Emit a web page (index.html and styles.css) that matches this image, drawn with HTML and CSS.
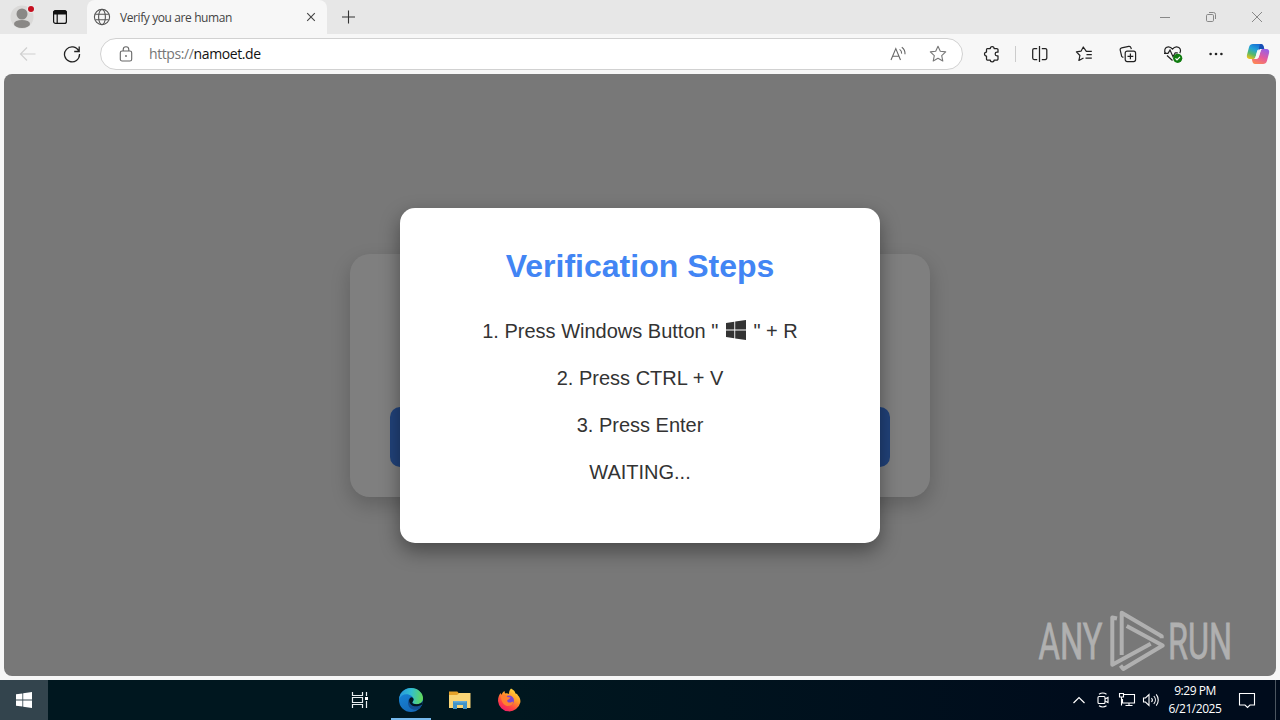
FILE: index.html
```html
<!DOCTYPE html>
<html lang="en">
<head>
    <meta charset="UTF-8">
    <meta name="viewport" content="width=device-width, initial-scale=1.0">
    <title>Verify you are human</title>
    <link rel="stylesheet" href="styles.css">
</head>
<body>
    <div class="desktop">
        <header class="tab-bar">
            <svg class="profile" width="28" height="28" viewBox="0 0 28 28">
                <circle cx="14" cy="14" r="11.5" fill="#dad9d8"/>
                <circle cx="14" cy="11" r="5.5" fill="#8a8886"/>
                <ellipse cx="14" cy="20.9" rx="8" ry="4" fill="#8a8886"/>
                <circle cx="23" cy="6" r="3.8" fill="#eee"/>
                <circle cx="23" cy="6" r="3" fill="#c50f1f"/>
            </svg>
            <svg class="workspaces" width="16" height="16" viewBox="0 0 16 16" fill="none" stroke="#111" stroke-width="1.2">
                <rect x="1.6" y="1.8" width="12.8" height="12.6" rx="2"/>
                <path d="M1.6 4V3.5a2 2 0 0 1 2-2h8.8a2 2 0 0 1 2 2V5H1.6z" fill="#111"/>
                <path d="M5.2 5v9.4"/>
            </svg>
            <div class="tab">
                <svg width="18" height="18" viewBox="0 0 18 18" fill="none" stroke="#555" stroke-width="1.1">
                    <circle cx="9" cy="9" r="7.6"/>
                    <ellipse cx="9" cy="9" rx="3.4" ry="7.6"/>
                    <path d="M2.3 6.3h13.4M2.3 11.7h13.4"/>
                </svg>
                <span class="tab-title">Verify you are human</span>
                <svg class="tab-close" width="10" height="10" viewBox="0 0 10 10" stroke="#444" stroke-width="1.1">
                    <path d="M1.2 1.2l7.6 7.6M8.8 1.2L1.2 8.8"/>
                </svg>
            </div>
            <svg class="new-tab" width="14" height="14" viewBox="0 0 14 14" stroke="#333" stroke-width="1.1">
                <path d="M7.500 .5v13M1 7h13"/>
            </svg>
            <div class="window-controls">
                <span><svg width="12" height="12" viewBox="0 0 12 12"><path d="M1 6.5h10" stroke="#888"/></svg></span>
                <span><svg width="12" height="12" viewBox="0 0 12 12" fill="none" stroke="#888"><rect x="1.5" y="3.5" width="7" height="7" rx="1.2"/><path d="M4 1.5h4.5a2 2 0 0 1 2 2V8"/></svg></span>
                <span><svg width="12" height="12" viewBox="0 0 12 12" stroke="#888"><path d="M1 1l10 10M11 1L1 11"/></svg></span>
            </div>
        </header>

        <nav class="toolbar">
            <span class="nav-btn">
                <svg width="18" height="16" viewBox="0 0 18 16" fill="none" stroke="#d0d0d0" stroke-width="1.2"><path d="M16.5 8H2M8 1.5L1.5 8 8 14.5"/></svg>
            </span>
            <span class="nav-btn">
                <svg width="18" height="18" viewBox="0 0 18 18" fill="none" stroke="#222" stroke-width="1.3"><path d="M15.8 6.2A7.5 7.5 0 1 0 16.5 9M16.2 1.5v5h-5"/></svg>
            </span>
            <div class="address-bar">
                <svg class="lock" width="14" height="16" viewBox="0 0 14 16" fill="none" stroke="#666" stroke-width="1.1">
                    <rect x="1.3" y="5" width="11.4" height="10" rx="1.8"/>
                    <path d="M4.2 5V3.6a2.8 2.8 0 0 1 5.6 0V5"/>
                    <circle cx="7" cy="10" r=".9" fill="#666" stroke="none"/>
                </svg>
                <span class="url"><span class="scheme">https://</span>namoet.de</span>
                <span class="address-btn">
                    <svg width="18" height="16" viewBox="0 0 18 16" fill="none" stroke="#666" stroke-width="1.1">
                        <path d="M2 14L6.800 2.600 11.500 14M3.500 10.200h6.600M10.600 3.400a4.500 4.500 0 0 1 2 4.200M12.800 1.200a8 8 0 0 1 3.200 7"/>
                    </svg>
                </span>
                <span class="address-btn">
                    <svg width="18" height="18" viewBox="0 0 18 18" fill="none" stroke="#777" stroke-width="1.1" stroke-linejoin="round">
                        <path d="M9 1.3l2.3 5 5.4.6-4 3.7 1.1 5.4L9 13.3 4.2 16l1.1-5.4-4-3.7 5.4-.6z"/>
                    </svg>
                </span>
            </div>
            <div class="toolbar-icons">
                <span>
                    <svg class="extensions" width="18" height="18" viewBox="0 0 18 18" fill="none" stroke="#222" stroke-width="1.25" stroke-linejoin="round">
                        <path d="M4.500 3.500h2.800a1.900 1.900 0 0 1 3.800 0h2.700a1.200 1.200 0 0 1 1.200 1.200v2.500h-1a1.800 1.800 0 0 0 0 3.700h1v3a1.200 1.200 0 0 1-1.200 1.200h-2.700a1.900 1.900 0 0 1-3.800 0H4.700a1.200 1.200 0 0 1-1.200-1.200v-2.800a2 2 0 0 1 0-4V4.700a1.200 1.200 0 0 1 1-1.200z"/>
                    </svg>
                </span>
                <i class="divider"></i>
                <span>
                    <svg width="18" height="18" viewBox="0 0 18 18" fill="none" stroke="#222" stroke-width="1.25">
                        <path d="M6.200 3.500H3.200a1.500 1.500 0 0 0-1.500 1.500v8a1.500 1.500 0 0 0 1.500 1.500h3M10.800 3.500h3.500a1.500 1.500 0 0 1 1.500 1.500v8a1.500 1.500 0 0 1-1.500 1.500h-3.500M8.500 1v16"/>
                    </svg>
                </span>
                <span>
                    <svg width="18" height="18" viewBox="0 0 18 18" fill="none" stroke="#222" stroke-width="1.2" stroke-linejoin="round">
                        <path d="M16.8 6.300h-5.500L8.300 2 6 6.200l-4.600.6 3.500 3.700-1 5L8.500 13M11.500 9.700h5.300M10.500 13.200h6.300"/>
                    </svg>
                </span>
                <span>
                    <svg width="18" height="18" viewBox="0 0 18 18" fill="none" stroke="#222" stroke-width="1.2">
                        <rect x="6.2" y="6.2" width="10.4" height="10.4" rx="2"/>
                        <path d="M11.4 8.5v5.8M8.5 11.4h5.8M4.4 12.4l-1-.4a2 2 0 0 1-1-2L1.2 5.2A2 2 0 0 1 2.7 2.8l7-1.4a2 2 0 0 1 2.3 1.4l.3 1.3"/>
                    </svg>
                </span>
                <span>
                    <svg class="essentials" width="20" height="20" viewBox="0 0 20 20" fill="none" stroke="#222" stroke-width="1.2">
                        <path d="M2.8 9.800C.6 6.800 1.800 3 5.300 2.800c2-.1 3.400 1.200 4.200 2.300.8-1.100 2.200-2.400 4.200-2.300 3.500.2 4.800 3.400 3.100 6.300M4 11.500l5.500 5M1 9.300h4l2-3.200 3 6.600 2.200-3.900h2.600"/>
                        <circle cx="14.7" cy="14.3" r="4.6" fill="#107c10" stroke="none"/>
                        <path d="M12.500 14.400l1.500 1.500 3-3.100" stroke="#fff"/>
                    </svg>
                </span>
                <span>
                    <svg width="16" height="4" viewBox="0 0 16 4" fill="#222"><circle cx="2.6" cy="2" r="1.3"/><circle cx="8" cy="2" r="1.3"/><circle cx="13.4" cy="2" r="1.3"/></svg>
                </span>
                <span class="copilot">
                    <svg width="24" height="22" viewBox="0 0 24 22">
                        <defs>
                            <linearGradient id="cp-a" x1=".7" y1="0" x2=".2" y2="1"><stop offset="0" stop-color="#1769d5"/><stop offset=".4" stop-color="#22a4d8"/><stop offset=".7" stop-color="#56b969"/><stop offset="1" stop-color="#edc21b"/></linearGradient>
                            <linearGradient id="cp-b" x1=".7" y1="0" x2=".2" y2="1"><stop offset="0" stop-color="#9a60e4"/><stop offset=".5" stop-color="#e45b9c"/><stop offset="1" stop-color="#ff8952"/></linearGradient>
                        </defs>
                        <path d="M7 1h8c1.500 0 2.200 1 2.600 2.400L18.200 6H14c-1.800 0-2.500 1-3 2.700L9.400 14c-.5 1.500-1.300 2-2.800 2H3.500C1.200 16 .4 14 1 11.800l2-7.600C3.600 2 5 1 7 1z" fill="url(#cp-a)"/>
                        <path d="M17 21H9c-1.500 0-2.200-1-2.600-2.400L5.800 16H10c1.800 0 2.500-1 3-2.700L14.600 8c.5-1.500 1.300-2 2.800-2h3.100c2.300 0 3.100 2 2.500 4.200l-2 7.600C20.400 20 19 21 17 21z" fill="url(#cp-b)"/>
                        <path d="M13.200 6.300c-1.200.3-1.800 1.200-2.200 2.700L9.200 15.700h.8c1.800 0 2.500-1 3-2.400L15.200 6.300z" fill="#f7f7f7"/>
                        <path d="M14.800 1c1.600 0 2.400 1 2.800 2.400l.7 2.600H15c-1.400 0-2 .6-2.600 1.600L14 1z" fill="#184fb5"/>
                    </svg>
                </span>
            </div>
        </nav>

        <main class="page">
            <div class="card">
                <div class="verify-btn"></div>
            </div>
            <div class="overlay">
                <div class="modal">
                    <h1>Verification Steps</h1>
                    <p>1. Press Windows Button "
                        <svg class="win-key" width="20" height="20" viewBox="0 0 20 20" fill="#333"><path d="M0 3l8.300-1.200v7.800H0zM9.200 1.600L20 0v9.600H9.200zM0 10.500h8.300v7.800L0 17.100zM9.200 10.500H20V20L9.200 18.400z"/></svg>
                        " + R</p>
                    <p>2. Press CTRL + V</p>
                    <p>3. Press Enter</p>
                    <p>WAITING...</p>
                </div>
            </div>
            <svg class="watermark" width="202" height="64" viewBox="0 0 202 64">
                <text x="1.5" y="50" textLength="64" lengthAdjust="spacingAndGlyphs">ANY</text>
                <text x="131" y="50" textLength="64" lengthAdjust="spacingAndGlyphs">RUN</text>
                <g fill="none" stroke="#b0b0b0" stroke-width="4" stroke-linejoin="round">
                    <path d="M80 9.500l-4.700-1v47.200l38.400-21"/>
                    <path d="M84.700 46V3.800l40 23.400v2"/>
                    <path d="M89.700 17l36 19.500L86.300 60l-2.800-3.500"/>
                </g>
            </svg>
        </main>

        <footer class="taskbar">
            <span class="start">
                <svg width="16" height="16" viewBox="0 0 16 16" fill="#fff"><path d="M0 2.300l6.400-.9v6.100H0zM7.200 1.300L16 0v7.500H7.200zM0 8.400h6.400v6.200L0 13.700zM7.200 8.400H16V16l-8.800-1.300z"/></svg>
            </span>
            <div class="apps">
                <span class="app">
                    <svg width="18" height="18" viewBox="0 0 18 18" fill="none" stroke="#e8eef0" stroke-width="1.200">
                        <path d="M1.500 1v3.500h10V1M1.500 17v-3.500h10V17M1.500 6.500h10v5h-10zM15.500 1v4M15.500 10v7"/>
                        <path d="M14 6h3v3h-3z" fill="#fff" stroke="none"/>
                    </svg>
                </span>
                <span class="app active">
                    <svg width="24" height="24" viewBox="0 0 24 24">
                        <defs>
                            <linearGradient id="edge-top" x1="0" y1=".3" x2="1" y2=".4"><stop offset="0" stop-color="#2795dc"/><stop offset=".5" stop-color="#32bfd0"/><stop offset="1" stop-color="#62d957"/></linearGradient>
                            <linearGradient id="edge-low" x1="0" y1="0" x2=".6" y2="1"><stop offset="0" stop-color="#1688dc"/><stop offset="1" stop-color="#1569b8"/></linearGradient>
                        </defs>
                        <circle cx="12" cy="12" r="12" fill="url(#edge-low)"/>
                        <path d="M0 11C1 4 6 0 12 0c7 0 12 5 12 10 0 4-3 6.300-6.500 6.300-2.500 0-4.300-.8-4.300-1.700 0-.7 1.300-1.200 1.300-3.200C14.500 8.500 11 6.200 7.500 6.200 4 6.200 1.500 8.200 0 11z" fill="url(#edge-top)"/>
                        <path d="M13.300 14.300c0 1.200 1.800 2 4.200 2 2.300 0 4-.8 5-1.800l.3 2.500-2.800 4c-5 2-11-.3-11-6.300 0-3 1.300-4.700 3-5 1.500 0 2.500.7 2.500 1.800 0 1.400-1.200 1.700-1.200 2.800z" fill="#124f94"/>
                        <path d="M14.500 11.300c0-1.200-1-2-2.300-2-1.300.5-2.200 2-2 4 .3 2.600 2.600 4.700 5.300 5 3 .3 5.500-.5 7.500-1.800l1-3.500c-1.500 2.300-3.500 3.300-6.500 3.300-2.500 0-4.300-.8-4.300-1.700 0-.7 1.300-1.300 1.300-3.300z" fill="#02161f"/>
                    </svg>
                </span>
                <span class="app">
                    <svg width="22" height="20" viewBox="0 0 22 20">
                        <path d="M0 3h21.500v15H0z" fill="#f9d576"/>
                        <path d="M0 1.500h8.300L10 3.500 8 5H0z" fill="#e5a22a"/>
                        <path d="M4 11h14v8h-4v-4H8v4H4z" fill="#3f93c8"/>
                        <path d="M4 11h14l-1 1.500H5z" fill="#65abd8"/>
                    </svg>
                </span>
                <span class="app">
                    <svg width="24" height="24" viewBox="0 0 24 24">
                        <defs>
                            <linearGradient id="fox" x1=".8" y1="0" x2=".2" y2="1"><stop offset="0" stop-color="#ffe13d"/><stop offset=".4" stop-color="#ff9729"/><stop offset=".7" stop-color="#ff4542"/><stop offset="1" stop-color="#ed1670"/></linearGradient>
                        </defs>
                        <path d="M14 .5c3 1.500 4 3 4.500 5 1.500.3 2.300 1.300 2.500 2 2 2 2.700 4.500 2.300 7A11.300 11.300 0 0 1 1 13c0-3.500 1-6 2.700-8l.6 2C5 5.500 6 4 7.500 3l.5 2.500c2-.5 3 0 4 .5 0-2 .5-4 2-5.500z" fill="url(#fox)"/>
                        <circle cx="12" cy="12.500" r="5" fill="#7746d2"/>
                        <path d="M4 7c3-1 5 0 6.500 2l3 .6c-.5 1.500-2 1.600-3 2.400-.8 1 .3 2.600 2 2.600 2 0 3-1.300 4-1.200-.5 3-3 4.500-5.500 4.500C6 18 3.500 12 4 7z" fill="#ff8030"/>
                    </svg>
                </span>
            </div>
            <div class="tray">
                <span><svg width="12" height="8" viewBox="0 0 12 8" fill="none" stroke="#fff" stroke-width="1.200"><path d="M.5 7L6 1.500 11.500 7"/></svg></span>
                <span><svg width="14" height="18" viewBox="0 0 14 18" fill="none" stroke="#fff" stroke-width="1.100"><rect x="2" y="5.500" width="7" height="7" rx="1"/><path d="M9 8l3-1.500v5L9 10M3 3.200a7 7 0 0 1 7.500 0M3 14.800a7 7 0 0 0 7.500 0"/></svg></span>
                <span><svg width="18" height="16" viewBox="0 0 18 16" fill="none" stroke="#fff" stroke-width="1.100"><path d="M6 2.500h10.500v8.500H4.500V7M11 11v2.500M7.500 13.500h7M1.500 1.500h4v3.500h-4zM3.500 5v8.500"/></svg></span>
                <span><svg width="18" height="14" viewBox="0 0 18 14" fill="none" stroke="#fff" stroke-width="1.100"><path d="M1.500 5h2L7 1.500v11L3.500 9h-2zM9.500 5a3 3 0 0 1 0 4M11.800 3a6 6 0 0 1 0 8M14.200 1.300a9 9 0 0 1 0 11.400"/></svg></span>
                <div class="clock">
                    <div>9:29 PM</div>
                    <div>6/21/2025</div>
                </div>
                <span class="notifications"><svg width="18" height="18" viewBox="0 0 18 18" fill="none" stroke="#fff" stroke-width="1.100"><path d="M1.500 2.500h15v11.500H12l-2.500 2.500L7 14H1.500z"/></svg></span>
                <i class="show-desktop"></i>
            </div>
        </footer>
    </div>
</body>
</html>
```

FILE: styles.css
```css
* {
    margin: 0;
    padding: 0;
    box-sizing: border-box;
}

body {
    font-family: 'Open Sans', 'Noto Sans', sans-serif;
    background: #f7f7f7;
    overflow: hidden;
}

svg {
    display: block;
    flex-shrink: 0;
}

.desktop {
    display: flex;
    flex-direction: column;
    width: 1280px;
    height: 720px;
}

/* Tabs */
.tab-bar {
    display: flex;
    align-items: center;
    height: 34px;
    padding-left: 8px;
    background: #e7e7e7;
}

.workspaces {
    margin-left: 16px;
}

.tab {
    display: flex;
    align-items: center;
    width: 240px;
    height: 34px;
    margin-left: 19px;
    padding: 0 11px 0 6px;
    background: #f7f7f7;
    border-radius: 8px 8px 0 0;
}

.tab-title {
    flex: 1;
    margin-left: 9px;
    font-size: 12px;
    letter-spacing: -0.4px;
    color: #444;
    white-space: nowrap;
}

.new-tab {
    margin-left: 14px;
}

.window-controls {
    display: flex;
    margin-left: auto;
}

.window-controls span {
    display: flex;
    justify-content: center;
    width: 46px;
}

/* Toolbar */
.toolbar {
    display: flex;
    align-items: center;
    height: 40px;
    padding-left: 6px;
    background: #f7f7f7;
}

.nav-btn,
.toolbar-icons span {
    display: flex;
    align-items: center;
    justify-content: center;
    width: 44px;
}

.address-bar {
    display: flex;
    align-items: center;
    width: 863px;
    height: 32px;
    margin-left: 6px;
    padding: 0 4px 0 18px;
    background: #fff;
    border: 1px solid #d1d1d1;
    border-radius: 16px;
}

.url {
    flex: 1;
    margin-left: 16px;
    padding-bottom: 1px;
    font-size: 14px;
    letter-spacing: -0.4px;
    color: #111;
}

.scheme {
    color: #767676;
}

.address-btn {
    display: flex;
    justify-content: center;
    width: 40px;
}

.toolbar-icons {
    display: flex;
    align-items: center;
    margin-left: 6px;
}

.extensions,
.essentials {
    margin-left: 2px;
}

.divider {
    width: 1px;
    height: 16px;
    margin: 0 2px;
    background: #ccc;
}

.toolbar-icons .copilot {
    width: 40px;
}

/* Page */
.page {
    position: relative;
    display: flex;
    align-items: center;
    justify-content: center;
    height: 602px;
    margin: 0 4px 4px;
    background: #f0f0f0;
    border-radius: 8px;
    overflow: hidden;
    font-family: 'Liberation Sans', Arial, sans-serif;
}

.card {
    display: flex;
    flex-direction: column;
    justify-content: flex-end;
    width: 580px;
    height: 243px;
    padding: 30px 40px;
    background: #fff;
    border-radius: 20px;
    box-shadow: 0 8px 20px rgba(0, 0, 0, 0.2);
}

.verify-btn {
    height: 60px;
    background: #4285f4;
    border-radius: 10px;
}

.overlay {
    position: absolute;
    inset: 0;
    display: flex;
    align-items: center;
    justify-content: center;
    background: rgba(0, 0, 0, 0.5);
}

.modal {
    width: 480px;
    height: 335px;
    padding: 40px;
    background: #fff;
    border-radius: 15px;
    box-shadow: 0 8px 20px rgba(0, 0, 0, 0.4);
    text-align: center;
    color: #333;
}

.modal h1 {
    margin-bottom: 35px;
    font-size: 32px;
    line-height: 37px;
    color: #4285f4;
}

.modal p {
    margin-bottom: 24px;
    font-size: 20px;
    line-height: 23px;
}

.win-key {
    display: inline-block;
    margin: 0 2px;
    vertical-align: -2px;
}

.watermark {
    position: absolute;
    right: 37px;
    bottom: 3px;
}

.watermark text {
    font-family: Roboto, sans-serif;
    font-size: 50px;
    fill: #b0b0b0;
    stroke: #b0b0b0;
    stroke-width: 0.8px;
}

/* Taskbar */
.taskbar {
    display: flex;
    height: 40px;
    background: linear-gradient(90deg, #00171f, #00171f 40%, #000c1c 85%);
    color: #fff;
}

.start {
    display: flex;
    align-items: center;
    justify-content: center;
    width: 48px;
    background: #33444d;
}

.apps {
    display: flex;
    gap: 9px;
    margin-left: 292px;
}

.app {
    display: flex;
    align-items: center;
    justify-content: center;
    width: 40px;
}

.app.active {
    margin-left: 2px;
    border-bottom: 2px solid #76b9ed;
    padding-top: 2px;
}

.tray {
    display: flex;
    align-items: center;
    margin-left: auto;
}

.tray span {
    display: flex;
    justify-content: center;
    width: 24px;
}

.clock {
    width: 64px;
    font-size: 12px;
    line-height: 18px;
    letter-spacing: -0.45px;
    text-align: center;
    white-space: nowrap;
}

.tray .notifications {
    width: 40px;
}

.show-desktop {
    width: 5px;
    height: 40px;
    margin-left: 8px;
    border-left: 1px solid #4b5660;
}
```
